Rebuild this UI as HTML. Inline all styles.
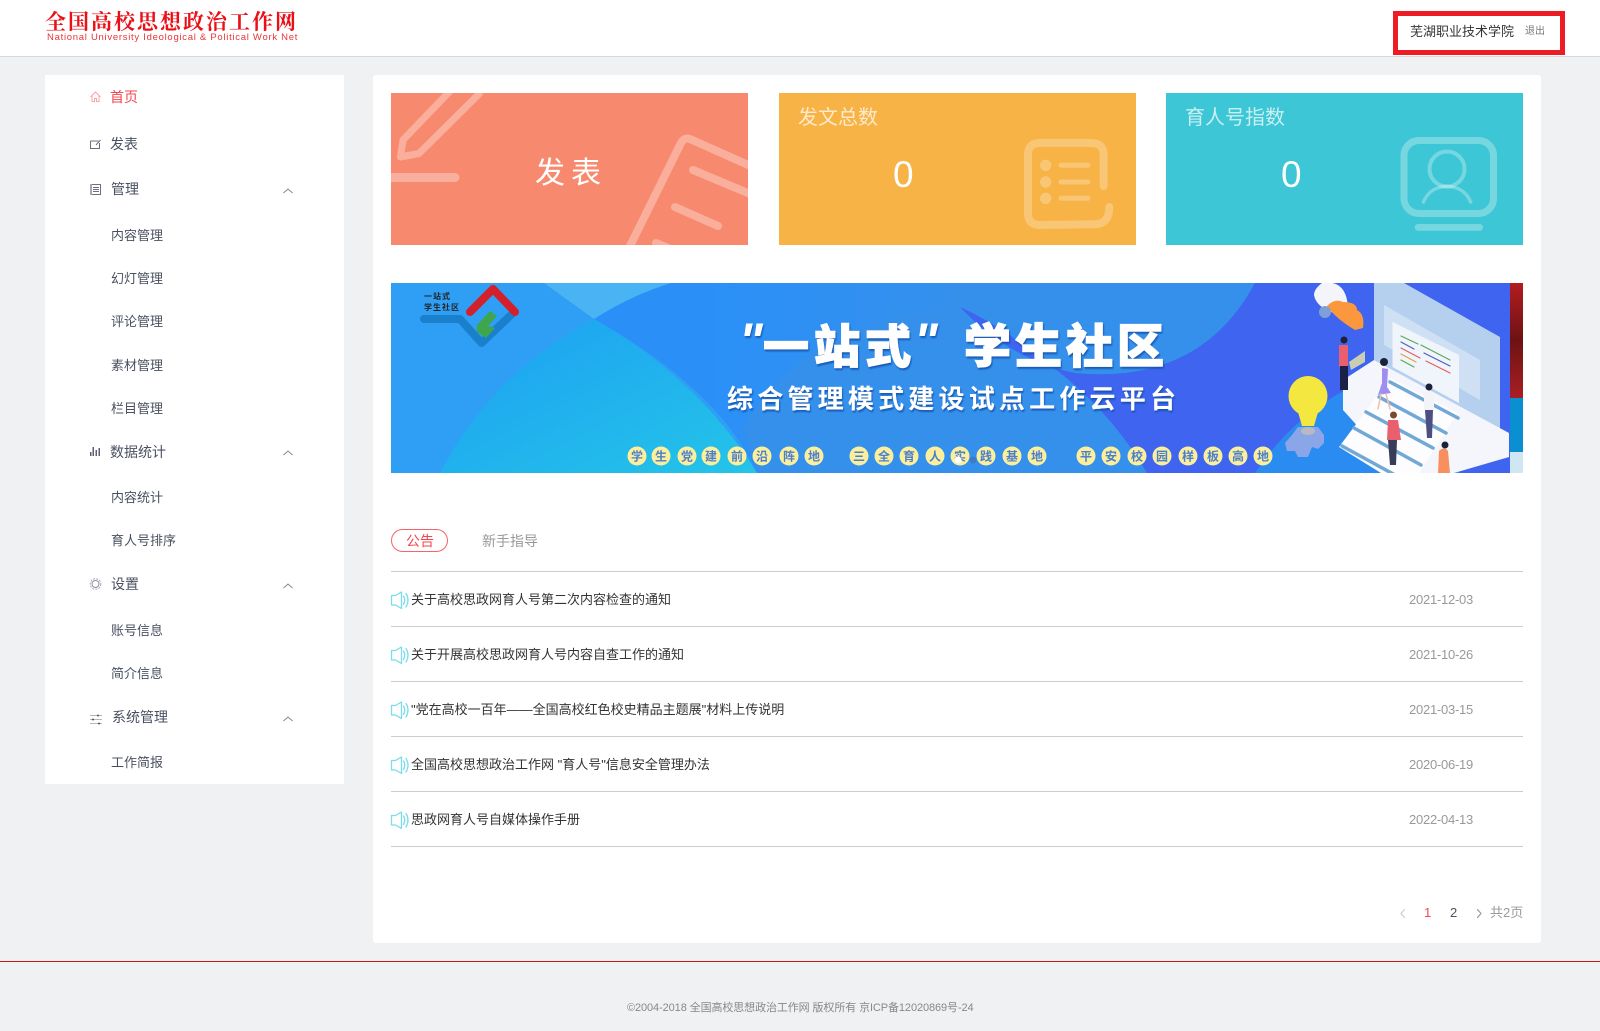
<!DOCTYPE html>
<html lang="zh-CN"><head><meta charset="utf-8"><title>全国高校思想政治工作网</title>
<style>
html,body{margin:0;padding:0;background:#f0f1f3}
body{width:1600px;height:1031px;position:relative;overflow:hidden;font-family:"Liberation Sans","WenQuanYi Zen Hei",sans-serif;color:#4a4f5c}
.a{position:absolute;white-space:nowrap;line-height:20px;height:20px}
.box{position:absolute;background:#fff}
.m{font-size:14px;color:#495060;left:110px}
.s{font-size:13px;color:#495060;left:111px}
.t{font-size:13px;color:#333;left:411px}
.d{font-size:13px;color:#999;left:1409px;letter-spacing:-.25px}
.l{position:absolute;left:391px;width:1132px;height:1px;background:#ccc}
svg{position:absolute;left:0;top:0}
</style></head><body>
<div class="box" style="left:0;top:0;width:1600px;height:56px;border-bottom:1px solid #d8d8d8"></div>
<div class="a" style="left:45px;top:9px;height:24px;line-height:24px;font-size:21px;letter-spacing:2px;color:#ea1018;font-family:'Noto Serif CJK SC',serif;font-weight:700">全国高校思想政治工作网</div>
<div class="a" style="left:47px;top:28px;font-size:9.5px;letter-spacing:.72px;color:#e8343a">National University Ideological &amp; Political Work Net</div>
<div style="position:absolute;left:1393px;top:11px;width:162px;height:34px;border:5px solid #ed1c24"></div>
<div class="a" style="left:1410px;top:22px;font-size:13px;color:#333">芜湖职业技术学院</div>
<div class="a" style="left:1525px;top:22px;font-size:10px;color:#777">退出</div>

<div class="box" style="left:45px;top:75px;width:299px;height:709px"></div>
<div class="box" style="left:373px;top:75px;width:1168px;height:868px;border-radius:3px"></div>

<div class="a m" style="top:87px;color:#f5474f">首页</div>
<div class="a m" style="top:134px">发表</div>
<div class="a m" style="top:179px;left:111px">管理</div>
<div class="a s" style="top:226px">内容管理</div>
<div class="a s" style="top:269px">幻灯管理</div>
<div class="a s" style="top:312px">评论管理</div>
<div class="a s" style="top:356px">素材管理</div>
<div class="a s" style="top:399px">栏目管理</div>
<div class="a m" style="top:442px">数据统计</div>
<div class="a s" style="top:488px">内容统计</div>
<div class="a s" style="top:531px">育人号排序</div>
<div class="a m" style="top:574px;left:111px">设置</div>
<div class="a s" style="top:621px">账号信息</div>
<div class="a s" style="top:664px">简介信息</div>
<div class="a m" style="top:707px;left:112px">系统管理</div>
<div class="a s" style="top:753px">工作简报</div>

<svg width="1600" height="1031" viewBox="0 0 1600 1031" fill="none">
<path d="M90.500 97 L95.500 92 L100.500 97 M92 96 V101.500 H94.500 V98.500 H96.500 V101.500 H99 V96" stroke="#f9a5a8" stroke-width="1"/>
<path d="M90.500 141 H98.500 M90.500 141 V148.500 H99.500 V143 M96 145 L100.500 140" stroke="#6b7080" stroke-width="1"/>
<path d="M91 184.500 H100.500 V194.500 H91 Z M93 187.500 H99 M93 189.500 H99 M93 191.500 H99" stroke="#6b7080" stroke-width="1"/>
<path d="M90 184 H92 V195 H90 Z" fill="#a5a8b2"/>
<path d="M90 452 h1.500 v4 h-1.500z M92.500 447 h1.500 v9 h-1.500z M95.500 450 h1.500 v6 h-1.500z M98.500 448 h1.500 v8 h-1.500z" fill="#5b6070"/>
<circle cx="95.500" cy="584" r="3.500" stroke="#8c909b" stroke-width="1"/><circle cx="95.500" cy="584" r="5.300" stroke="#a6a9b2" stroke-width="1" stroke-dasharray="2 1.200"/>
<path d="M90 715.500 H102 M90 719.500 H102 M90 723.500 H102" stroke="#b5b7bf" stroke-width="1"/>
<circle cx="98" cy="715.500" r="1" fill="#555"/><circle cx="93" cy="719.500" r="1" fill="#555"/><circle cx="99" cy="723.500" r="1" fill="#555"/>
<g stroke="#858995" stroke-width="1"><path d="M283.500 193 L288 189 L292.500 193"/><path d="M283.500 455 L288 451 L292.500 455"/><path d="M283.500 588 L288 584 L292.500 588"/><path d="M283.500 721 L288 717 L292.500 721"/></g>
</svg>

<div class="box" style="left:391px;top:93px;width:357px;height:152px;background:#f78a6e"></div>
<div class="box" style="left:779px;top:93px;width:357px;height:152px;background:#f7b346"></div>
<div class="box" style="left:1166px;top:93px;width:357px;height:152px;background:#3dc6d5"></div>
<svg width="1600" height="1031" viewBox="0 0 1600 1031" fill="none" stroke-linecap="round" stroke-linejoin="round">
<defs><clipPath id="c1"><rect x="391" y="93" width="357" height="152"/></clipPath>
<linearGradient id="rs" x1="0" y1="0" x2="0" y2="1"><stop offset="0" stop-color="#b21c20"/><stop offset=".5" stop-color="#6e1214"/><stop offset="1" stop-color="#a81f22"/></linearGradient>
<linearGradient id="cy" x1="0" y1="0" x2="1" y2="1"><stop offset="0" stop-color="#1d9ff3"/><stop offset="1" stop-color="#24c4e8"/></linearGradient>
<linearGradient id="mb" gradientUnits="userSpaceOnUse" x1="700" y1="0" x2="960" y2="0"><stop offset="0" stop-color="#2a90f8"/><stop offset="1" stop-color="#3590ec"/></linearGradient>
<clipPath id="c2"><rect x="391" y="283" width="1132" height="190"/></clipPath></defs>
<g clip-path="url(#c1)" stroke="#fff" stroke-opacity=".32">
<path d="M400.500 157 L403 140 L453 88 L475 88 L479 94 L419 153.500 Z" stroke-width="7"/>
<path d="M385 177.500 H455" stroke-width="9"/>
<path d="M628 250 L681 143 Q684 137 690 139 L755 168" stroke-width="8"/>
<path d="M693 170 L755 196 M675 207 L718 226 M656 243 L680 253" stroke-width="8"/>
</g>
<g stroke="#fff" stroke-opacity=".26">
<path d="M1103.700 186 V155 Q1103.700 143 1091 143 H1040 Q1028 143 1028 155 V213 Q1028 225 1040 225 L1095 224.300 Q1109.300 224 1109.300 207" stroke-width="8"/>
<path d="M1061 165.300 H1088 M1061 182 H1088 M1061 198.300 H1088" stroke-width="5"/>
</g>
<g fill="#fff" fill-opacity=".26"><circle cx="1045.700" cy="165.300" r="5.700"/><circle cx="1045.700" cy="182" r="5.700"/><circle cx="1045.700" cy="198.300" r="5.700"/></g>
<g stroke="#fff" stroke-opacity=".3">
<rect x="1404" y="140.500" width="89.500" height="73" rx="15" stroke-width="7"/>
<circle cx="1447" cy="169" r="17.500" stroke-width="4"/>
<path d="M1423.500 202 C1428 191 1437 186.500 1447 186.500 C1457 186.500 1466 191 1470.700 202" stroke-width="3.500"/>
</g>
<rect x="1414.700" y="224" width="68.300" height="6.700" rx="3.300" fill="#fff" fill-opacity=".3"/>

<g clip-path="url(#c2)" stroke="none">
<rect x="391" y="283" width="1132" height="190" fill="#2e9ff5"/>
<path d="M544 283 H671 Q630 296 594 319 Z" fill="#4ab3f3"/>
<path d="M671 283 H1260 V473 H757 Q720 390 594 319 Q630 296 671 283Z" fill="url(#mb)"/>
<path d="M440 473 Q490 375 594 319 Q700 380 757 473Z" fill="url(#cy)"/>
<path d="M960 283 H1255 Q1200 385 1075 373 Q1010 360 960 307Z" fill="#3590ec"/>
<path d="M743 427 Q800 330 930 310 L960 307 Q1000 325 1050 365 Q1110 420 1147 473 H757Z" fill="#3590ec"/>
<path d="M960 307 Q1010 360 1075 373 Q1200 385 1255 283 H1510 V473 H1147 Q1110 410 1050 365 Q1000 325 960 307Z" fill="#3e64f0"/>
<path d="M1255 473 Q1290 420 1345 390 L1460 473Z" fill="#2a8cf0"/>
<rect x="1510" y="283" width="13" height="115" fill="url(#rs)"/>
<rect x="1510" y="398" width="13" height="75" fill="#0a8fd0"/>
<rect x="1510" y="452" width="13" height="21" fill="#cfe7f3"/>
<path d="M424 319 H460 L481.500 343 L512 314" stroke="#1b80cc" stroke-width="8" fill="none"/>
<path d="M470 312 L493 289 L515 312" stroke="#d4202a" stroke-width="8" fill="none"/>
<path d="M477 332 L486 338 L495 328 L488 326 L497 316 L490 311 L477 325Z" fill="#3fa64e"/>
<path d="M1322 283 q24 -4 26 24 l-14 6 q-18 -6 -20 -18 q0 -6 8 -12z" fill="#f3f5fb"/>
<path d="M1327 306 q8 -8 16 -4 q14 0 14 8 q8 4 6 18 l-8 2 q-20 -12 -28 -24z" fill="#fb983d"/>
<circle cx="1325" cy="312" r="6" fill="#7f9fd8"/>
<path d="M1374 283 H1404 L1500 337 V430 L1374 360Z" fill="#b5d0ef"/>
<path d="M1384 305 L1480 360 V400 L1384 345Z" fill="#cfe0f5"/>
<path d="M1392.500 322 L1459 355 V403 L1392.500 367Z" fill="#f0f5fc"/>
<g stroke-width="1.200" fill="none"><path d="M1401 336 L1418 344 M1421 345 L1450 360" stroke="#5aa85a"/><path d="M1401 342 L1414 349 M1424 353 L1450 366" stroke="#4a5fc0"/><path d="M1401 348 L1420 358 M1426 361 L1450 373" stroke="#e06060"/><path d="M1401 354 L1416 362" stroke="#e0a040"/><path d="M1401 360 L1414 367" stroke="#5aa85a"/></g>
<path d="M1343 380 L1374 360 L1509 433 V457 L1454 473 H1400 L1343 410Z" fill="#f4f6fc"/>
<path d="M1339 447 L1390.500 378 L1457.500 413 L1419 473 H1381Z" fill="#fdfdff"/>
<g stroke="#72a8d4" stroke-width="3.500" fill="none"><path d="M1390 382 L1458 418"/><path d="M1379 397 L1446 433"/><path d="M1366 412 L1433 448"/><path d="M1354 428 L1421 465"/><path d="M1342 446 L1395 475"/></g>
<path d="M1339 345 h9 v22 h-9z" fill="#ea5f6e"/><circle cx="1344" cy="340" r="3.500" fill="#1c2238"/><path d="M1340 366 h8 v24 h-8z" fill="#1a2046"/><path d="M1349 362 L1365 351 L1365 362 L1351 370Z" fill="#c9cdb4"/>
<path d="M1382 368 l6 1 l-1 18 l4 6 l-13 2 l4 -12z" fill="#9d8ef0"/><circle cx="1384" cy="362" r="4" fill="#1c2238"/><path d="M1381 394 l-3 15 M1386 394 l4 15" stroke="#f0bfb0" stroke-width="1.500"/>
<path d="M1424 392 h10 v18 h-10z" fill="#f3f4f8"/><circle cx="1429" cy="387" r="3.500" fill="#1c2238"/><path d="M1425 410 h8 l-1 28 h-5z" fill="#4c4f80"/>
<path d="M1388 420 h10 l3 20 h-14z" fill="#ea5f6e"/><circle cx="1393.500" cy="415" r="3.500" fill="#7b4a2a"/><path d="M1388 440 h9 l-1 25 h-6z" fill="#383c58"/>
<path d="M1439 451 q5 -5 9 0 l2 22 h-12z" fill="#f78f5f"/><circle cx="1445" cy="445" r="3.500" fill="#1c2238"/>
<ellipse cx="1308" cy="396" rx="19.500" ry="20" fill="#f3e740"/>
<path d="M1298 412 L1302 426 H1314 L1318 412Z" fill="#f3e740"/>
<path d="M1292 435 l6 -8 h20 l6 8 v8 l-6 6 l-6 -2 l-4 10 h-10 l-3 -6 h-8 l-2 -8z" fill="#8aa5e8"/>
<ellipse cx="1308" cy="431" rx="7" ry="4" fill="#b8bac0"/>
</g>
<g stroke="#7adde8" stroke-width="1.300" fill="none">
<g id="sp"><path d="M391.500 595.500 H395.500 L401.500 592 V608.500 L395.500 605 H391.500Z"/><path d="M403.500 596 Q406 600 403.500 604.500 M406 593.500 Q410 600 406 607"/></g>
<use href="#sp" y="55"/><use href="#sp" y="110"/><use href="#sp" y="165"/><use href="#sp" y="220"/>
</g>
<path d="M1404.500 909.500 L1401 913.500 L1404.500 917.500" stroke="#ccc" stroke-width="1.200"/>
<path d="M1477.500 909.500 L1481 913.500 L1477.500 917.500" stroke="#999" stroke-width="1.200"/>
</svg>

<svg width="1600" height="1031" viewBox="0 0 1600 1031" style="font-family:'Noto Sans CJK SC',sans-serif">
<filter id="sh" x="-5%" y="-20%" width="110%" height="140%"><feDropShadow dx="1" dy="2" stdDeviation=".8" flood-color="#0d4fa8" flood-opacity=".8"/></filter>
<g filter="url(#sh)" fill="#fff" font-weight="900">
<text x="739" y="358" font-size="50" font-family="Liberation Sans" font-style="italic" font-weight="700">"</text>
<text x="914" y="358" font-size="50" font-family="Liberation Sans" font-style="italic" font-weight="700">"</text>
<g stroke="#fff" stroke-width="1.200">
<text x="763" y="363" font-size="46" textLength="148">一站式</text>
<text x="964" y="363" font-size="47" textLength="200">学生社区</text>
</g>
<text x="727" y="408" font-size="26" font-weight="700" textLength="449">综合管理模式建设试点工作云平台</text>
</g>
<g font-size="8" font-weight="700" fill="#222"><text x="424" y="299" textLength="26">一站式</text><text x="424" y="310" textLength="35">学生社区</text></g>
<g fill="#fbef9b">
<circle cx="637" cy="456" r="9.500"/><circle cx="661" cy="456" r="9.500"/><circle cx="687" cy="456" r="9.500"/><circle cx="711" cy="456" r="9.500"/><circle cx="737" cy="456" r="9.500"/><circle cx="762" cy="456" r="9.500"/><circle cx="789" cy="456" r="9.500"/><circle cx="814" cy="456" r="9.500"/>
<circle cx="859" cy="456" r="9.500"/><circle cx="884" cy="456" r="9.500"/><circle cx="909" cy="456" r="9.500"/><circle cx="935" cy="456" r="9.500"/><circle cx="960" cy="456" r="9.500"/><circle cx="986" cy="456" r="9.500"/><circle cx="1012" cy="456" r="9.500"/><circle cx="1037" cy="456" r="9.500"/>
<circle cx="1086" cy="456" r="9.500"/><circle cx="1111" cy="456" r="9.500"/><circle cx="1137" cy="456" r="9.500"/><circle cx="1162" cy="456" r="9.500"/><circle cx="1188" cy="456" r="9.500"/><circle cx="1213" cy="456" r="9.500"/><circle cx="1238" cy="456" r="9.500"/><circle cx="1263" cy="456" r="9.500"/>
</g>
<g fill="#4a7fd0" font-size="12" font-weight="700" text-anchor="middle">
<text x="637" y="460.500">学</text><text x="661" y="460.500">生</text><text x="687" y="460.500">党</text><text x="711" y="460.500">建</text><text x="737" y="460.500">前</text><text x="762" y="460.500">沿</text><text x="789" y="460.500">阵</text><text x="814" y="460.500">地</text>
<text x="859" y="460.500">三</text><text x="884" y="460.500">全</text><text x="909" y="460.500">育</text><text x="935" y="460.500">人</text><text x="960" y="460.500">实</text><text x="986" y="460.500">践</text><text x="1012" y="460.500">基</text><text x="1037" y="460.500">地</text>
<text x="1086" y="460.500">平</text><text x="1111" y="460.500">安</text><text x="1137" y="460.500">校</text><text x="1162" y="460.500">园</text><text x="1188" y="460.500">样</text><text x="1213" y="460.500">板</text><text x="1238" y="460.500">高</text><text x="1263" y="460.500">地</text>
</g>
<circle cx="958" cy="460" r="3.500" fill="#fff"/><circle cx="973" cy="460" r="3.500" fill="#3f79c8"/>
</svg>

<div class="a" style="left:535px;top:158px;height:32px;line-height:32px;font-size:30px;letter-spacing:6px;color:#fff">发表</div>
<div class="a" style="left:798px;top:108px;font-size:20px;color:rgba(255,255,255,.72)">发文总数</div>
<div class="a" style="left:1185px;top:108px;font-size:20px;color:rgba(255,255,255,.72)">育人号指数</div>
<div class="a" style="left:893px;top:155px;height:40px;line-height:40px;font-size:37px;color:#fff">0</div>
<div class="a" style="left:1281px;top:155px;height:40px;line-height:40px;font-size:37px;color:#fff">0</div>

<div style="position:absolute;left:391px;top:529px;width:55px;height:21px;border:1px solid #f5646a;border-radius:12px"></div>
<div class="a" style="left:406px;top:531px;font-size:14px;color:#f5474f">公告</div>
<div class="a" style="left:482px;top:531px;font-size:14px;color:#999">新手指导</div>
<div class="l" style="top:571px"></div><div class="l" style="top:626px"></div><div class="l" style="top:681px"></div><div class="l" style="top:736px"></div><div class="l" style="top:791px"></div><div class="l" style="top:846px"></div>
<div class="a t" style="top:590px">关于高校思政网育人号第二次内容检查的通知</div><div class="a d" style="top:590px">2021-12-03</div>
<div class="a t" style="top:645px">关于开展高校思政网育人号内容自查工作的通知</div><div class="a d" style="top:645px">2021-10-26</div>
<div class="a t" style="top:700px">"党在高校一百年——全国高校红色校史精品主题展"材料上传说明</div><div class="a d" style="top:700px">2021-03-15</div>
<div class="a t" style="top:755px">全国高校思想政治工作网 "育人号"信息安全管理办法</div><div class="a d" style="top:755px">2020-06-19</div>
<div class="a t" style="top:810px">思政网育人号自媒体操作手册</div><div class="a d" style="top:810px">2022-04-13</div>

<div class="a" style="left:1424px;top:903px;font-size:13px;color:#f5474f">1</div>
<div class="a" style="left:1450px;top:903px;font-size:13px;color:#495060">2</div>
<div class="a" style="left:1490px;top:903px;font-size:13px;color:#999">共2页</div>

<div style="position:absolute;left:0;top:961px;width:1600px;height:1px;background:#c3161c"></div>
<div class="a" style="left:627px;top:998px;font-size:11px;color:#888;letter-spacing:-.1px">©2004-2018 全国高校思想政治工作网 版权所有 京ICP备12020869号-24</div>
</body></html>
